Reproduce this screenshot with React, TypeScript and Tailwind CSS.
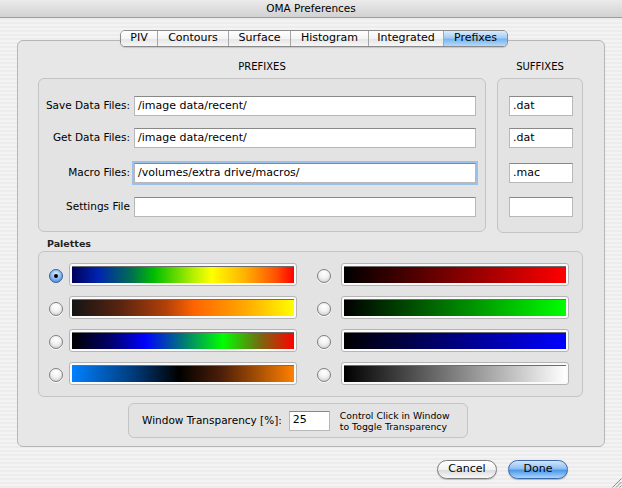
import React from 'react';

const tabs = [
  { label: 'PIV', w: 'w-[36px]' },
  { label: 'Contours', w: 'w-[71px]' },
  { label: 'Surface', w: 'w-[62px]' },
  { label: 'Histogram', w: 'w-[78px]' },
  { label: 'Integrated', w: 'w-[75px]' },
  { label: 'Prefixes', w: 'w-[64px]', active: true },
];

const fields = [
  { label: 'Save Data Files:', value: '/image data/recent/', suffix: '.dat', mt: 'mt-[17px]' },
  { label: 'Get Data Files:', value: '/image data/recent/', suffix: '.dat', mt: 'mt-[12px]' },
  { label: 'Macro Files:', value: '/volumes/extra drive/macros/', suffix: '.mac', mt: 'mt-[15px]', focus: true },
  { label: 'Settings File', value: '', suffix: '', mt: 'mt-[14px]' },
];

// left / right palette of each row
const palettes = [
  [
    'bg-[linear-gradient(to_right,#00005c,#0024b0_12%,#007050_27%,#00bf00_37%,#b8f000_55%,#ffff00_63%,#ffb000_78%,#ff5000_92%,#ff0000)]',
    'bg-[linear-gradient(to_right,#000000,#ff0000)]',
  ],
  [
    'bg-[linear-gradient(to_right,#141414,#5a2410_22%,#b04008_42%,#ff6400_55%,#ffa800_78%,#ffff00)]',
    'bg-[linear-gradient(to_right,#000000,#00ff00)]',
  ],
  [
    'bg-[linear-gradient(to_right,#000000,#000070_18%,#0000ff_33%,#007878_50%,#00ff00_68%,#707010_84%,#ff0000)]',
    'bg-[linear-gradient(to_right,#000000,#0000ff)]',
  ],
  [
    'bg-[linear-gradient(to_right,#0080ff,#003a78_28%,#000000_48%,#502008_68%,#ff8000)]',
    'bg-[linear-gradient(to_right,#000000,#ffffff)]',
  ],
];

function Radio({ checked, className = '' }: { checked?: boolean; className?: string }) {
  return checked ? (
    <div
      className={`flex h-[14px] w-[14px] shrink-0 items-center justify-center rounded-full border border-[#3b5f98] bg-[radial-gradient(circle_at_50%_35%,#e4f1ff,#7fb2ee_55%,#2f6fd0)] ${className}`}
    >
      <div className="h-[4px] w-[4px] rounded-full bg-black" />
    </div>
  ) : (
    <div
      className={`h-[14px] w-[14px] shrink-0 rounded-full border border-[#808080] bg-[radial-gradient(circle_at_50%_30%,#ffffff,#f2f2f2_45%,#c4c4c4)] shadow-[0_1px_0_rgba(255,255,255,0.8)] ${className}`}
    />
  );
}

function Bar({ gradient, className = '' }: { gradient: string; className?: string }) {
  return (
    <div
      className={`h-[23px] w-[228px] shrink-0 rounded-[3px] border border-[#b4b4b4] bg-[#fafafa] p-[2px] ${className}`}
    >
      <div className={`h-full w-full border-t border-[#6c6c6c] ${gradient}`} />
    </div>
  );
}

function Field({ value, className = '', focus }: { value: string; className?: string; focus?: boolean }) {
  return (
    <div
      className={`flex h-[20px] items-center border border-[#b8b8b8] border-t-[#888888] bg-white pl-[3px] text-[11px] ${
        focus ? 'shadow-[0_0_0_2px_#9cc0ea]' : ''
      } ${className}`}
    >
      {value}
    </div>
  );
}

export default function App() {
  return (
    <div className="relative flex h-[488px] w-[622px] flex-col overflow-hidden bg-[repeating-linear-gradient(0deg,#ececec_0px,#ececec_2px,#f3f3f3_2px,#f3f3f3_4px)] font-['Lucida_Grande','DejaVu_Sans',sans-serif] text-black">
      {/* Title bar */}
      <div className="flex h-[18px] shrink-0 items-center justify-center border-b border-[#9c9c9c] bg-[linear-gradient(#ebebeb,#d2d2d2)] text-[10.5px]">
        OMA Preferences
      </div>

      {/* Tabs */}
      <div className="relative z-10 mt-[12px] flex h-[17px] pl-[120px]">
        <div className="flex h-full overflow-hidden rounded-[5px] border border-[#8a8a8a] shadow-[0_1px_1px_rgba(0,0,0,0.15)]">
          {tabs.map((t, i) => (
            <div
              key={t.label}
              className={`flex h-full items-center justify-center text-[11px] ${t.w} ${
                i > 0 ? 'border-l border-[#a6a6a6]' : ''
              } ${
                t.active
                  ? 'bg-[linear-gradient(#d9ecfc,#a7cdf4_45%,#7ab4ee_55%,#b4dafc)]'
                  : 'bg-[linear-gradient(#ffffff,#f4f4f4_50%,#e6e6e6_55%,#f6f6f6)]'
              }`}
            >
              {t.label}
            </div>
          ))}
        </div>
      </div>

      {/* Tab box */}
      <div className="mx-[17px] mt-[-7px] flex h-[407px] flex-col rounded-[6px] border border-[#b6b6b6] bg-[#e7e7e7] pl-[20px] pt-[19px]">
        <div className="flex gap-[11px]">
          {/* Prefixes */}
          <div className="flex w-[448px] flex-col">
            <div className="h-[14px] text-center text-[10px] leading-[14px]">PREFIXES</div>
            <div className="mt-[4px] flex h-[154px] flex-col rounded-[6px] border border-[#c4c4c4] bg-[#e3e3e3]">
              {fields.map((f) => (
                <div key={f.label} className={`flex items-center ${f.mt}`}>
                  <div className="w-[91px] text-right text-[10.5px]">{f.label}</div>
                  <Field value={f.value} focus={f.focus} className="ml-[4px] w-[342px]" />
                </div>
              ))}
            </div>
          </div>

          {/* Suffixes */}
          <div className="flex w-[86px] flex-col">
            <div className="h-[14px] text-center text-[10px] leading-[14px]">SUFFIXES</div>
            <div className="mt-[4px] flex h-[155px] flex-col rounded-[6px] border border-[#c4c4c4] bg-[#e3e3e3] pl-[11px]">
              {fields.map((f) => (
                <Field key={f.label} value={f.suffix} className={`w-[64px] ${f.mt}`} />
              ))}
            </div>
          </div>
        </div>

        {/* Palettes */}
        <div className="mt-[4px] h-[14px] pl-[9px] text-[9.5px] font-bold leading-[14px] text-[#222]">Palettes</div>
        <div className="flex h-[146px] w-[545px] flex-col gap-[10px] rounded-[6px] border border-[#c4c4c4] bg-[#e3e3e3] pt-[11px]">
          {palettes.map(([left, right], i) => (
            <div key={i} className="flex items-center">
              <Radio checked={i === 0} className="ml-[10px] mt-[3px]" />
              <Bar gradient={left} className="ml-[6px]" />
              <Radio className="ml-[20px] mt-[3px]" />
              <Bar gradient={right} className="ml-[10px]" />
            </div>
          ))}
        </div>

        {/* Transparency */}
        <div className="ml-[90px] mt-[6px] flex h-[35px] w-[340px] items-center rounded-[6px] border border-[#c4c4c4] bg-[#e3e3e3] pl-[13px]">
          <span className="text-[10.5px]">Window Transparency [%]:</span>
          <Field value="25" className="ml-[7px] h-[18px] w-[41px]" />
          <div className="ml-[10px] text-[9.3px] leading-[11px]">
            <div>Control Click in Window</div>
            <div>to Toggle Transparency</div>
          </div>
        </div>
      </div>

      {/* Buttons */}
      <div className="mt-[13px] flex justify-end gap-[11px] pr-[54px]">
        <div className="flex h-[19px] w-[60px] items-center justify-center rounded-full border border-[#7c7c7c] bg-[linear-gradient(#ffffff,#f2f2f2_50%,#dcdcdc_55%,#f8f8f8)] text-[11px] shadow-[0_1px_1px_rgba(0,0,0,0.2)]">
          Cancel
        </div>
        <div className="flex h-[19px] w-[60px] items-center justify-center rounded-full border border-[#3b68a8] bg-[linear-gradient(#cfe6fc,#8fc0f2_45%,#4f97e8_55%,#a8d6fe)] text-[11px] shadow-[0_1px_1px_rgba(0,0,0,0.25)]">
          Done
        </div>
      </div>

      {/* Resize grip */}
      <svg width="12" height="12" viewBox="0 0 12 12" className="absolute bottom-0 right-0">
        <path d="M11.5 2.5 L2.5 11.5 M11.5 6 L6 11.5 M11.5 9.5 L9.5 11.5" stroke="#8a8a8a" strokeWidth="1" />
      </svg>
    </div>
  );
}
